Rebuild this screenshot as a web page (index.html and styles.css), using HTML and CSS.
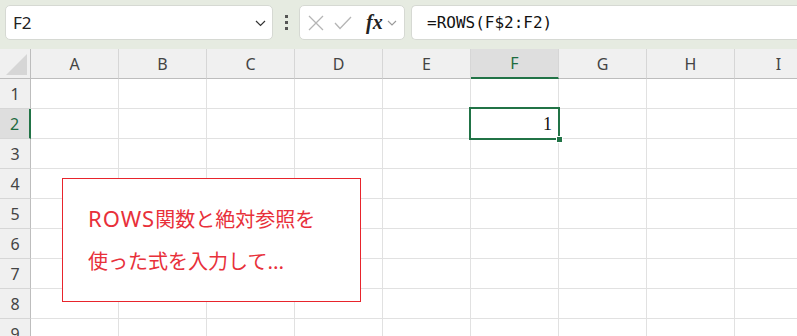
FILE: index.html
```html
<!DOCTYPE html>
<html lang="ja">
<head>
  <meta charset="UTF-8">
  <title>ROWS</title>
  <link rel="stylesheet" href="styles.css">
</head>
<body>

  <!-- Formula toolbar -->
  <div class="toolbar">
    <div class="name-box">
      <span>F2</span>
      <svg class="chev" width="11" height="7" viewBox="0 0 11 7"><path d="M1 1 L5.5 5.5 L10 1" fill="none" stroke="#333" stroke-width="1.2"/></svg>
    </div>
    <div class="grip"><i></i><i></i><i></i></div>
    <div class="fx-buttons">
      <svg width="16" height="16" viewBox="0 0 16 16"><path d="M1 1 L15 15 M15 1 L1 15" stroke="#b5b5b5" stroke-width="1.3"/></svg>
      <svg width="18" height="14" viewBox="0 0 18 14"><path d="M1 7 L6 12.5 L17 1" fill="none" stroke="#b5b5b5" stroke-width="1.3"/></svg>
      <span class="fx">fx</span>
      <svg width="10" height="6" viewBox="0 0 10 6"><path d="M1 1 L5 5 L9 1" fill="none" stroke="#999" stroke-width="1.1"/></svg>
    </div>
    <div class="formula">=ROWS(F$2:F2)</div>
  </div>

  <!-- Sheet -->
  <div class="sheet">
    <div class="grid" id="grid"></div>

    <div class="note">
      <span class="latin">ROWS</span>関数と絶対参照を<br>使った式を入力して...
    </div>
  </div>

  <script>
    var cols = ['A', 'B', 'C', 'D', 'E', 'F', 'G', 'H', 'I'];
    var grid = document.getElementById('grid');
    var html = '<div class="corner"><span></span></div>';

    cols.forEach(function(c) {
      html += '<div class="col-head' + (c === 'F' ? ' active' : '') + '">' + c + '</div>';
    });

    for (var r = 1; r <= 9; r++) {
      html += '<div class="row-head' + (r === 2 ? ' active' : '') + '">' + r + '</div>';
      cols.forEach(function(c) {
        if (c === 'F' && r === 2) {
          html += '<div class="cell selected">1<span class="handle"></span></div>';
        } else {
          html += '<div class="cell"></div>';
        }
      });
    }

    grid.innerHTML = html;
  </script>

</body>
</html>
```

FILE: styles.css
```css
body {
  margin: 0;
  width: 797px;
  height: 336px;
  overflow: hidden;
  background: #fff;
  font-family: "Noto Sans", "Noto Sans CJK JP", sans-serif;
}

/* toolbar */
.toolbar {
  height: 49px;
  background-color: #e6ebe1;
  display: flex;
  align-items: flex-start;
  padding: 5px 0 0 5px;
  box-sizing: border-box;
}

.name-box, .fx-buttons, .formula {
  height: 35px;
  background: #fff;
  border: 1px solid #d6d9d3;
  border-radius: 5px;
  box-sizing: border-box;
  display: flex;
  align-items: center;
}

.name-box {
  width: 268px;
  padding: 0 6px 0 7px;
  justify-content: space-between;
  font-size: 17px;
  color: #222;
}

.chev {
  margin-top: 2px;
}

.grip {
  width: 26px;
  height: 35px;
  display: flex;
  flex-direction: column;
  align-items: center;
  justify-content: center;
  gap: 3px;
}

.grip i {
  width: 3px;
  height: 3px;
  background: #555;
}

.fx-buttons {
  width: 106px;
  padding: 0 4px 0 8px;
  gap: 10px;
}

.fx {
  font-family: "Liberation Serif", serif;
  font-style: italic;
  font-weight: bold;
  font-size: 20px;
  color: #222;
  margin-left: 4px;
  margin-right: -6px;
}

.formula {
  flex: 1;
  margin-left: 6px;
  border-right: none;
  border-radius: 5px 0 0 5px;
  padding-left: 15px;
  font-family: "DejaVu Sans Mono", monospace;
  font-size: 16px;
  color: #111;
}

/* sheet */
.sheet {
  position: relative;
}

.grid {
  display: grid;
  grid-template-columns: 31px repeat(9, 88px);
  grid-auto-rows: 30px;
}

.corner {
  background: #f0f0f0;
  border-right: 1px solid #bdbdbd;
  border-bottom: 1px solid #bdbdbd;
  position: relative;
}

.corner span {
  position: absolute;
  right: 3px;
  bottom: 3px;
  width: 0;
  height: 0;
  border-left: 21px solid transparent;
  border-bottom: 21px solid #d6d6d6;
}

.col-head {
  background: #f0f0f0;
  border-right: 1px solid #d6d6d6;
  border-bottom: 1px solid #bdbdbd;
  display: flex;
  align-items: center;
  justify-content: center;
  font-size: 16px;
  color: #444;
}

.col-head.active {
  background: #dedede;
  color: #1d6b3f;
  border-bottom: 2px solid #217346;
}

.row-head {
  background: #f0f0f0;
  border-right: 1px solid #bdbdbd;
  border-bottom: 1px solid #d6d6d6;
  display: flex;
  align-items: center;
  justify-content: center;
  font-size: 16px;
  color: #444;
}

.row-head.active {
  background: #dedede;
  color: #1d6b3f;
  border-right: 2px solid #217346;
}

.cell {
  border-right: 1px solid #e1e1e1;
  border-bottom: 1px solid #e1e1e1;
}

.cell.selected {
  position: relative;
  text-align: right;
  padding-right: 6px;
  font-family: "Liberation Serif", serif;
  font-size: 18px;
  line-height: 30px;
  color: #111;
}

.cell.selected::after {
  content: "";
  position: absolute;
  left: -2px;
  top: -2px;
  right: -2px;
  bottom: -2px;
  border: 2px solid #217346;
}

.handle {
  position: absolute;
  right: -5px;
  bottom: -5px;
  width: 5px;
  height: 5px;
  background: #217346;
  border: 1px solid #fff;
  z-index: 2;
}

/* callout box */
.note {
  position: absolute;
  left: 62px;
  top: 129px;
  width: 299px;
  height: 124px;
  background: #fff;
  border: 1px solid #e8242c;
  padding: 18px 0 0 25px;
  box-sizing: border-box;
  font-family: "Noto Sans CJK JP", sans-serif;
  font-size: 20px;
  line-height: 42px;
  color: #e8303a;
}

.note .latin {
  font-family: "Noto Sans", sans-serif;
  font-size: 22px;
  letter-spacing: 1px;
}
```
